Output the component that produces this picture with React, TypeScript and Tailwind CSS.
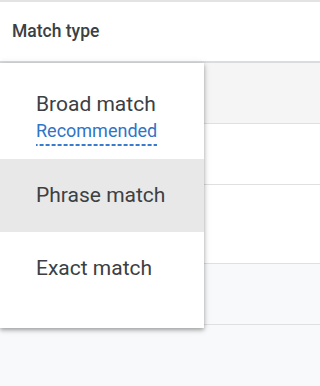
import React from "react";

const rows = [
  { h: "h-[61px]", bg: "bg-[#f5f5f5]" },
  { h: "h-[61px]", bg: "bg-white" },
  { h: "h-[79px]", bg: "bg-white" },
  { h: "h-[61px]", bg: "bg-[#f8f9fa]" },
];

function MatchMenu() {
  return (
    <div className="absolute left-0 top-[63px] w-[204px] h-[265px] bg-white shadow-[0_2px_4px_rgba(0,0,0,0.3),0_1px_8px_rgba(0,0,0,0.12)]">
      <div className="h-[96px] pl-9 pt-[27px]">
        <div className="text-[21px] leading-[28px] text-[#3c4043]">Broad match</div>
        <span className="inline-block mt-[2px] pb-[4px] text-[18px] leading-[22px] text-[#2f74c7] bg-[linear-gradient(to_right,#3a7bcc_4px,transparent_4px)] bg-[length:6px_2px] bg-repeat-x bg-bottom">
          Recommended
        </span>
      </div>
      <div className="h-[73px] pl-9 flex items-center bg-[#e8e8e8] text-[21px] text-[#3c4043]">
        Phrase match
      </div>
      <div className="h-[73px] pl-9 flex items-center text-[21px] text-[#3c4043]">
        Exact match
      </div>
    </div>
  );
}

export default function App() {
  return (
    <div
      className="relative w-full h-[386px] overflow-hidden bg-[#f8f9fa]"
      style={{ fontFamily: "Roboto, 'Liberation Sans', sans-serif" }}
    >
      <div className="h-[2px] bg-[#e3e3e3]" />
      <div className="h-[59px] bg-white flex items-center px-3">
        <span className="text-[17.5px] font-medium text-[#3c4043]">Match type</span>
      </div>
      <div className="h-[2px] bg-[#dadce0]" />
      {rows.map((r, i) => (
        <div key={i} className={`${r.h} ${r.bg} border-b border-[#e0e0e0]`} />
      ))}
      <MatchMenu />
    </div>
  );
}
